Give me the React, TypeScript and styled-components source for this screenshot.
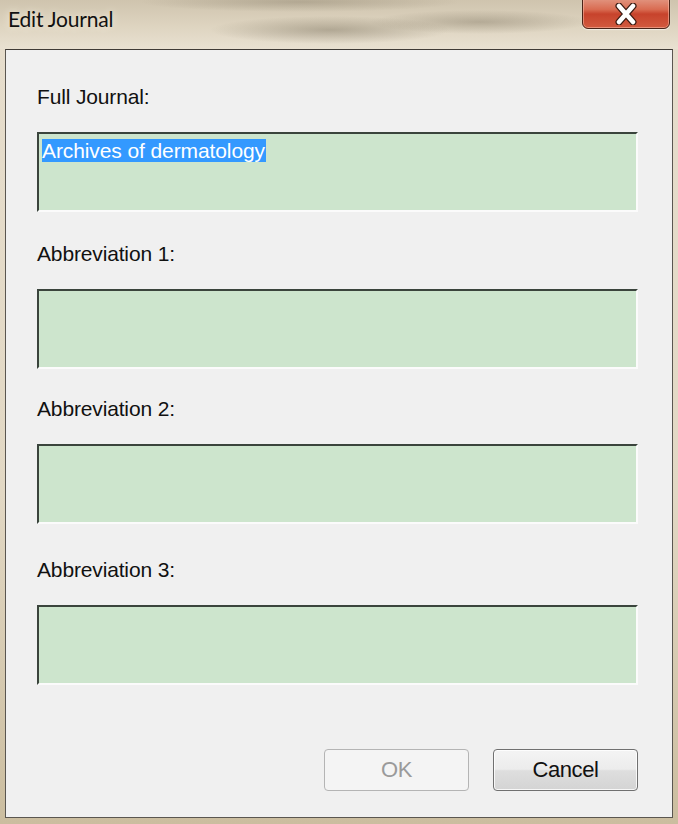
import styled, { createGlobalStyle } from "styled-components";

const GlobalStyle = createGlobalStyle`
  html, body {
    margin: 0;
    padding: 0;
    background: #d8cfbd;
  }
  #root {
    width: 678px;
    height: 824px;
  }
`;

const Window = styled.div`
  width: 678px;
  height: 824px;
  display: flex;
  flex-direction: column;
  overflow: hidden;
  background: linear-gradient(
    180deg,
    #d4c9b3 0%,
    #ddd3c0 4%,
    #e6ddcc 6%,
    #e2d8c4 60%,
    #cbbd9f 100%
  );
  font-family: "Liberation Sans", Arial, sans-serif;
`;

const TitleBar = styled.div`
  position: relative;
  height: 49px;
  flex: none;
  display: flex;
  align-items: flex-start;
  padding-left: 8px;
  background:
    radial-gradient(ellipse 120px 14px at 330px 30px, rgba(90, 80, 60, 0.35), transparent),
    radial-gradient(ellipse 110px 12px at 480px 22px, rgba(90, 80, 60, 0.3), transparent),
    radial-gradient(ellipse 160px 10px at 300px 2px, rgba(90, 80, 60, 0.25), transparent),
    linear-gradient(180deg, #cfc4ae 0%, #ddd3bf 50%, #e9e1d1 100%);
`;

const Title = styled.div`
  margin-top: 4px;
  font-family: Lato, "Open Sans", sans-serif;
  font-size: 21px;
  line-height: 30px;
  color: #111;
  letter-spacing: -0.2px;
  text-shadow: 0 0 8px rgba(255, 250, 235, 0.9);
`;

const CloseButton = styled.div`
  position: absolute;
  top: -4px;
  left: 582px;
  width: 88px;
  height: 33px;
  box-sizing: border-box;
  border: 1px solid #4a2418;
  border-radius: 0 0 6px 6px;
  background: linear-gradient(180deg, #e39c88 0%, #d96c52 40%, #c7432c 55%, #d25a3f 100%);
  box-shadow: inset 0 0 0 1px rgba(255, 200, 180, 0.5), 0 1px 1px rgba(255, 255, 255, 0.6);
  display: flex;
  align-items: center;
  justify-content: center;
  padding-top: 3px;
`;

const Client = styled.div`
  flex: 1;
  margin: 0 5px 6px 5px;
  box-sizing: border-box;
  background: #f0f0f0;
  border: 1px solid #5a5650;
  border-top-color: #3f3b36;
  display: flex;
  flex-direction: column;
  padding: 36px 34px 26px 31px;
`;

const Field = styled.div<{ $gap: number }>`
  display: flex;
  flex-direction: column;
  margin-bottom: ${(p) => p.$gap}px;
`;

const Label = styled.div`
  font-size: 21px;
  line-height: 22px;
  color: #111;
  letter-spacing: -0.15px;
  margin-bottom: 24px;
`;

const TextBox = styled.div`
  height: 80px;
  box-sizing: border-box;
  background: #cde5cd;
  border-top: 2px solid #3a443c;
  border-left: 2px solid #3a443c;
  border-right: 2px solid #fbfbfb;
  border-bottom: 2px solid #fbfbfb;
  padding: 4px 0 0 3px;
  font-size: 21px;
  line-height: 25px;
  letter-spacing: -0.1px;
`;

const Selected = styled.span`
  background: #3399ff;
  color: #fff;
  padding-right: 1px;
`;

const ButtonRow = styled.div`
  margin-top: auto;
  display: flex;
  justify-content: flex-end;
  gap: 24px;
`;

const Button = styled.div<{ $disabled?: boolean }>`
  width: 145px;
  height: 42px;
  box-sizing: border-box;
  border-radius: 4px;
  display: flex;
  align-items: center;
  justify-content: center;
  font-size: 22px;
  letter-spacing: -0.4px;
  border: 1px solid ${(p) => (p.$disabled ? "#b4b4b4" : "#707070")};
  color: ${(p) => (p.$disabled ? "#9a9a9a" : "#111")};
  background: ${(p) =>
    p.$disabled
      ? "#f4f4f4"
      : "linear-gradient(180deg, #f4f4f4 0%, #ececec 48%, #dedede 52%, #d4d4d4 100%)"};
  box-shadow: ${(p) => (p.$disabled ? "none" : "inset 0 0 0 1px rgba(255,255,255,0.8)")};
`;

const fields = [
  { label: "Full Journal:", value: "Archives of dermatology", gap: 31 },
  { label: "Abbreviation 1:", value: "", gap: 29 },
  { label: "Abbreviation 2:", value: "", gap: 35 },
  { label: "Abbreviation 3:", value: "", gap: 0 },
];

export default function App() {
  return (
    <>
      <GlobalStyle />
      <Window>
        <TitleBar>
          <Title>Edit Journal</Title>
          <CloseButton>
            <svg width="26" height="22" viewBox="0 0 26 22">
              <path
                d="M6 3 L20 19 M20 3 L6 19"
                stroke="#3a1a12"
                strokeWidth="7"
                strokeLinecap="round"
              />
              <path
                d="M6 3 L20 19 M20 3 L6 19"
                stroke="#ffffff"
                strokeWidth="4.5"
                strokeLinecap="round"
              />
            </svg>
          </CloseButton>
        </TitleBar>
        <Client>
          {fields.map((f) => (
            <Field key={f.label} $gap={f.gap}>
              <Label>{f.label}</Label>
              <TextBox>{f.value && <Selected>{f.value}</Selected>}</TextBox>
            </Field>
          ))}
          <ButtonRow>
            <Button $disabled>OK</Button>
            <Button>Cancel</Button>
          </ButtonRow>
        </Client>
      </Window>
    </>
  );
}
